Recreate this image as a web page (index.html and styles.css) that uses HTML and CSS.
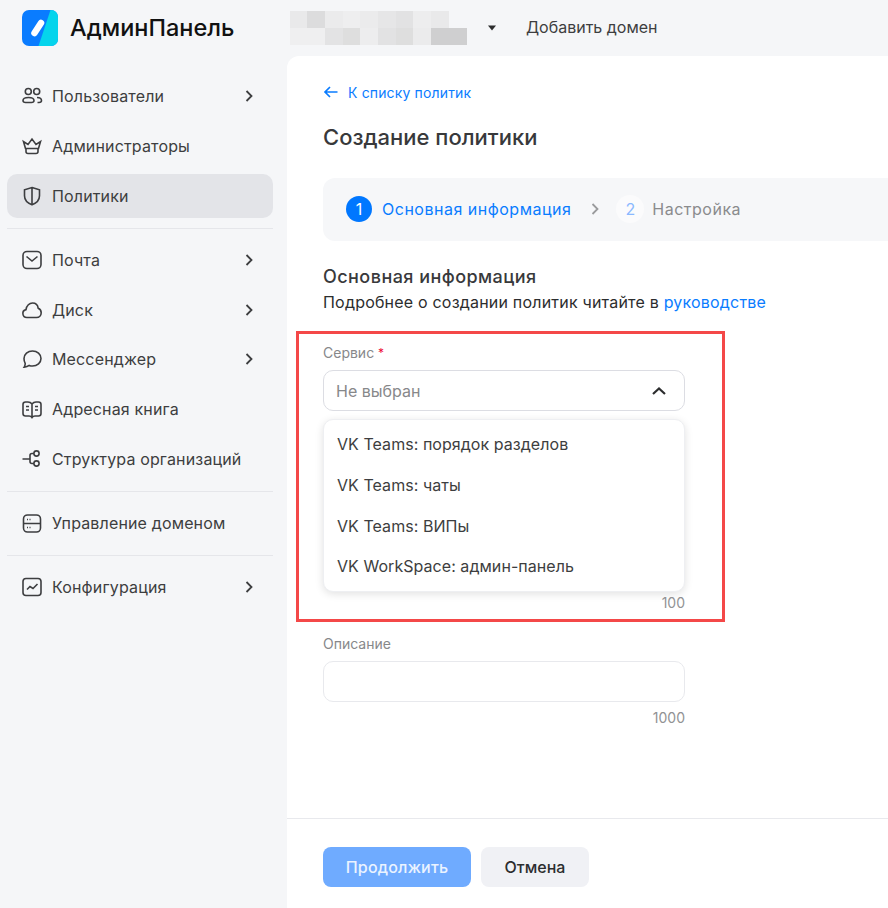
FILE: index.html
```html
<!DOCTYPE html>
<html>
<head>
    <title>АдминПанель</title>
    <link rel="stylesheet" href="styles.css">
</head>
<body>
    <aside class="sidebar">
        <div class="logo">
            <svg width="36" height="36" viewBox="0 0 36 36">
                <rect width="36" height="36" rx="7" fill="#0a7cff"/>
                <path d="M28.500 0h.5a7 7 0 0 1 7 7v22a7 7 0 0 1-7 7H16.500z" fill="#05d4ec"/>
                <path d="M19 13L12.500 23" stroke="#fff" stroke-width="6.500" stroke-linecap="round" fill="none"/>
            </svg>
            <span class="logo-text">АдминПанель</span>
        </div>
        <nav class="nav">
            <a class="nav-item">
                <svg class="icon" viewBox="0 0 22 22"><circle cx="7.300" cy="6.500" r="3"/><circle cx="15.700" cy="6.500" r="3"/><path d="M2 15.500c0-2 2-3 5.500-3s5.500 1 5.500 3c0 1.500-1 2-2.500 2h-6c-1.500 0-2.500-.5-2.500-2zM16 12.500c2.500 0 4.500 1 4.500 3 0 1.500-1 2-2.500 2h-1.500"/></svg>
                <span class="nav-label">Пользователи</span>
                <svg class="chevron" viewBox="0 0 10 14"><path d="M2.500 2l5 5-5 5"/></svg>
            </a>
            <a class="nav-item">
                <svg class="icon" viewBox="0 0 22 22"><path d="M4.500 13.500L2.500 6.500l4.500 3L11 4l4 5.500 4.500-3-2 7zM4.500 13.500h13M5 13.500v3a2 2 0 0 0 2 2h8a2 2 0 0 0 2-2v-3"/></svg>
                <span class="nav-label">Администраторы</span>
            </a>
            <a class="nav-item active">
                <svg class="icon" viewBox="0 0 22 22"><path d="M11 2.500l7.500 2.300v6c0 4.500-3.500 7.500-7.500 9-4-1.500-7.500-4.500-7.500-9v-6zM11 2.500v17.300"/></svg>
                <span class="nav-label">Политики</span>
            </a>
            <div class="nav-divider"></div>
            <a class="nav-item">
                <svg class="icon" viewBox="0 0 22 22"><rect x="2" y="2.500" width="18" height="17" rx="4"/><path d="M5.500 7.500l5.500 4.500 5.500-4.500"/></svg>
                <span class="nav-label">Почта</span>
                <svg class="chevron" viewBox="0 0 10 14"><path d="M2.500 2l5 5-5 5"/></svg>
            </a>
            <a class="nav-item">
                <svg class="icon" viewBox="0 0 22 22"><path d="M6 18.500a4 4 0 0 1-1-7.900C5.500 6.500 8.500 4 11.500 4c3 0 5.300 2.200 5.700 5.300 2 .8 3 2.500 3 4.400 0 2.700-2 4.800-4.700 4.800z"/></svg>
                <span class="nav-label">Диск</span>
                <svg class="chevron" viewBox="0 0 10 14"><path d="M2.500 2l5 5-5 5"/></svg>
            </a>
            <a class="nav-item">
                <svg class="icon" viewBox="0 0 22 22"><path d="M11.500 3c4.700 0 8.500 3.300 8.500 7.500S16.200 18 11.500 18c-1.200 0-2.300-.2-3.300-.6-1.300 1-3 1.600-5 1.700.8-1.200 1.100-2.600 1-3.800C3.400 14 3 12.300 3 10.500 3 6.300 6.800 3 11.500 3z"/></svg>
                <span class="nav-label">Мессенджер</span>
                <svg class="chevron" viewBox="0 0 10 14"><path d="M2.500 2l5 5-5 5"/></svg>
            </a>
            <a class="nav-item">
                <svg class="icon" viewBox="0 0 22 22"><path d="M11 6c-1-1.300-2.500-2-4-2H4.500A2.500 2.500 0 0 0 2 6.500v9A2.500 2.500 0 0 0 4.500 18H8c1.500 0 2.300.5 3 1.500.7-1 1.500-1.500 3-1.500h3.500a2.500 2.500 0 0 0 2.500-2.500v-9A2.500 2.500 0 0 0 17.500 4H15c-1.500 0-3 .7-4 2zM11 6v13M5 8.500h3M5 12h3M14 8.500h3M14 12h3"/></svg>
                <span class="nav-label">Адресная книга</span>
            </a>
            <a class="nav-item">
                <svg class="icon" viewBox="0 0 22 22"><path d="M1.500 11h7.500M13 5.500h-2a2 2 0 0 0-2 2v6a2 2 0 0 0 2 2h2"/><circle cx="15.500" cy="5.500" r="2.600"/><circle cx="15.500" cy="15.500" r="2.600"/></svg>
                <span class="nav-label">Структура организаций</span>
            </a>
            <div class="nav-divider"></div>
            <a class="nav-item">
                <svg class="icon" viewBox="0 0 22 22"><rect x="2.500" y="3" width="17" height="17" rx="4"/><path d="M2.500 11.500h17M6 7.500h1M8.500 7.500h1M6 15.500h1M8.500 15.500h1"/></svg>
                <span class="nav-label">Управление доменом</span>
            </a>
            <div class="nav-divider"></div>
            <a class="nav-item">
                <svg class="icon" viewBox="0 0 22 22"><rect x="2" y="2.500" width="18" height="17" rx="3"/><path d="M6 13.500l3-3 3 2 4.500-4.500"/></svg>
                <span class="nav-label">Конфигурация</span>
                <svg class="chevron" viewBox="0 0 10 14"><path d="M2.500 2l5 5-5 5"/></svg>
            </a>
        </nav>
    </aside>

    <div class="content">
        <header class="topbar">
            <svg class="mosaic" width="177" height="34" viewBox="0 0 177 34">
                <rect x="0" y="0" width="18" height="17" fill="#e9e9ea"/>
                <rect x="17" y="0" width="18" height="17" fill="#dcdcdd"/>
                <rect x="35" y="0" width="18" height="17" fill="#ebebec"/>
                <rect x="53" y="0" width="18" height="17" fill="#eeeeef"/>
                <rect x="70" y="0" width="18" height="17" fill="#ebebec"/>
                <rect x="88" y="0" width="18" height="17" fill="#e6e6e7"/>
                <rect x="106" y="0" width="18" height="17" fill="#e2e2e3"/>
                <rect x="123" y="0" width="18" height="17" fill="#ededee"/>
                <rect x="141" y="0" width="18" height="17" fill="#e9e9ea"/>
                <rect x="0" y="17" width="18" height="17" fill="#efeff0"/>
                <rect x="17" y="17" width="18" height="17" fill="#efeff0"/>
                <rect x="35" y="17" width="18" height="17" fill="#e3e3e4"/>
                <rect x="53" y="17" width="18" height="17" fill="#dedede"/>
                <rect x="70" y="17" width="18" height="17" fill="#ededee"/>
                <rect x="88" y="17" width="18" height="17" fill="#e2e2e3"/>
                <rect x="106" y="17" width="18" height="17" fill="#dedede"/>
                <rect x="123" y="17" width="18" height="17" fill="#ebebec"/>
                <rect x="141" y="17" width="36" height="17" fill="#cfcfd0"/>
            </svg>
            <svg class="caret" width="8" height="6" viewBox="0 0 8 6"><path d="M0 .5h8L4 5.500z"/></svg>
            <span class="add-domain">Добавить домен</span>
        </header>

        <main class="page">
            <div class="page-body">
                <a class="back-link">
                    <svg width="16" height="14" viewBox="0 0 16 14"><path d="M14.500 7H2M7 2L2 7l5 5"/></svg>
                    <span>К списку политик</span>
                </a>
                <h1 class="page-title">Создание политики</h1>

                <div class="steps">
                    <span class="step-num current">1</span>
                    <span class="step-name current">Основная информация</span>
                    <svg class="step-arrow" width="10" height="14" viewBox="0 0 10 14"><path d="M2.500 2l5 5-5 5"/></svg>
                    <span class="step-num next">2</span>
                    <span class="step-name">Настройка</span>
                </div>

                <h2 class="section-title">Основная информация</h2>
                <p class="section-text">Подробнее о создании политик читайте в <a class="link">руководстве</a></p>

                <div class="form">
                    <label class="field-label">Сервис <span class="required">*</span></label>
                    <div class="select">
                        <span>Не выбран</span>
                        <svg width="16" height="10" viewBox="0 0 16 10"><path d="M2 8l6-5.500L14 8"/></svg>
                    </div>
                    <ul class="menu">
                        <li>VK Teams: порядок разделов</li>
                        <li>VK Teams: чаты</li>
                        <li>VK Teams: ВИПы</li>
                        <li>VK WorkSpace: админ-панель</li>
                    </ul>
                    <div class="counter">100</div>

                    <label class="field-label second">Описание</label>
                    <div class="input"></div>
                    <div class="counter spaced">1000</div>
                </div>
            </div>

            <footer class="page-footer">
                <button class="btn primary">Продолжить</button>
                <button class="btn">Отмена</button>
            </footer>
        </main>
    </div>

    <div class="callout"></div>
</body>
</html>
```

FILE: styles.css
```css
body, html {
    height: 100%;
    margin: 0;
    overflow: hidden;
}

body {
    display: flex;
    background-color: #f5f6f8;
    color: #2c2d2e;
    font-family: Inter, "Noto Sans", sans-serif;
    font-size: 16px;
}

/* sidebar */

.sidebar {
    width: 287px;
    flex-shrink: 0;
}

.logo {
    display: flex;
    align-items: center;
    gap: 12px;
    padding: 8px 0 0 22px;
    height: 48px;
    box-sizing: border-box;
}

.logo-text {
    font-size: 23.500px;
    font-weight: 500;
    color: #111;
    margin-top: -2px;
}

.nav {
    display: flex;
    flex-direction: column;
    padding: 26.300px 14px 0 7px;
}

.nav-item {
    display: flex;
    align-items: center;
    height: 44px;
    margin-bottom: 5.700px;
    padding: 0 14px;
    border-radius: 10px;
    color: #3d3e40;
    font-size: 16px;
    letter-spacing: 0.150px;
}

.nav-item.active {
    background-color: #e3e4e8;
}

.icon {
    width: 22px;
    height: 22px;
    margin-right: 9px;
    fill: none;
    stroke: #3d3e40;
    stroke-width: 1.600;
    flex-shrink: 0;
}

.nav-label {
    flex: 1;
}

.chevron {
    width: 10px;
    height: 14px;
    margin-right: 5px;
    fill: none;
    stroke: #3d3e40;
    stroke-width: 1.800;
}

.nav-divider {
    height: 1px;
    background-color: #e5e6ea;
    margin: 4.600px 0 9px;
}

/* top bar */

.content {
    flex: 1;
    display: flex;
    flex-direction: column;
    min-width: 0;
}

.topbar {
    display: flex;
    align-items: center;
    height: 56px;
    flex-shrink: 0;
    color: #3d3e40;
}

.mosaic {
    margin: 0 0 1px 3px;
}

.caret {
    margin-left: 21px;
    fill: #2c2d2e;
}

.add-domain {
    margin: 0 0 2px 30px;
    font-size: 16px;
}

/* page */

.page {
    flex: 1;
    display: flex;
    flex-direction: column;
    background-color: #fff;
    border-top-left-radius: 12px;
    overflow: hidden;
}

.page-body {
    flex: 1;
    padding: 0 0 0 36px;
}

.back-link {
    display: flex;
    align-items: center;
    gap: 9px;
    margin-top: 27px;
    height: 18px;
    color: #0a7cff;
    font-size: 14px;
    letter-spacing: 0.150px;
}

.back-link svg {
    fill: none;
    stroke: #0a7cff;
    stroke-width: 1.700;
}

.page-title {
    margin: 20px 0 0;
    height: 33px;
    line-height: 33px;
    font-size: 22px;
    font-weight: 500;
    color: #38393b;
}

.steps {
    display: flex;
    align-items: center;
    width: 700px;
    height: 63px;
    margin-top: 24px;
    padding: 0 0 1px 23px;
    box-sizing: border-box;
    background-color: #f6f7f9;
    border-radius: 12px;
}

.step-num {
    display: flex;
    align-items: center;
    justify-content: center;
    width: 26px;
    height: 26px;
    border-radius: 50%;
    font-size: 16px;
}

.step-num.current {
    background-color: #0077ff;
    color: #fff;
}

.step-num.next {
    width: 28px;
    height: 28px;
    background-color: #fbfbfc;
    color: #8ab8ff;
    margin-right: 8px;
}

.step-name {
    color: #8a8b8d;
    letter-spacing: 0.500px;
}

.step-name.current {
    color: #0a7cff;
    margin-left: 10px;
}

.step-arrow {
    margin: 0 16px 0 19px;
    fill: none;
    stroke: #9a9b9d;
    stroke-width: 1.800;
}

.section-title {
    margin: 24px 0 0;
    font-size: 18px;
    line-height: 24px;
    font-weight: 500;
    letter-spacing: 0.450px;
    color: #38393b;
}

.section-text {
    margin: 1px 0 0;
    line-height: 24px;
    letter-spacing: 0.200px;
}

.link {
    color: #0a7cff;
}

.form {
    width: 362px;
    margin-top: 30px;
}

.field-label {
    display: block;
    height: 18px;
    line-height: 18px;
    font-size: 14px;
    color: #87888a;
}

.field-label.second {
    margin-top: 23px;
}

.required {
    color: #ed0a34;
    font-size: 12px;
    vertical-align: top;
}

.select, .input {
    display: flex;
    align-items: center;
    justify-content: space-between;
    box-sizing: border-box;
    height: 41px;
    margin-top: 8px;
    padding: 0 17px 0 12px;
    border: 1px solid #dcdde3;
    border-radius: 10px;
    background-color: #fff;
    color: #87888a;
}

.input {
    border-color: #e8e9ed;
}

.select svg {
    fill: none;
    stroke: #2c2d2e;
    stroke-width: 2.200;
}

.menu {
    list-style: none;
    box-sizing: border-box;
    height: 173px;
    margin: 8px 0 0;
    padding: 4px 0;
    border: 1px solid #eeeff2;
    border-radius: 10px;
    box-shadow: 0 2px 8px rgba(0,0,0,0.12);
    background-color: #fff;
}

.menu li {
    height: 40.800px;
    line-height: 40px;
    padding-left: 13px;
    color: #3d3e40;
    letter-spacing: 0.050px;
}

.counter {
    height: 18px;
    line-height: 18px;
    margin-top: 2px;
    text-align: right;
    font-size: 14px;
    color: #919294;
}

.counter.spaced {
    margin-top: 7px;
}

.page-footer {
    display: flex;
    gap: 10px;
    height: 90px;
    box-sizing: border-box;
    padding: 28px 0 0 36px;
    border-top: 1px solid #e8e9ed;
}

.btn {
    height: 40px;
    width: 108px;
    border: none;
    border-radius: 8px;
    background-color: #f0f1f5;
    color: #2c2d2e;
    font-family: inherit;
    font-size: 16px;
    font-weight: 500;
}

.btn.primary {
    width: 148px;
    background-color: #6fabff;
    color: #eaf3ff;
    letter-spacing: 0.200px;
}

/* red frame drawn over the screenshot */

.callout {
    position: absolute;
    left: 296px;
    top: 331px;
    width: 423px;
    height: 285px;
    border: 3px solid #f44848;
}
```
